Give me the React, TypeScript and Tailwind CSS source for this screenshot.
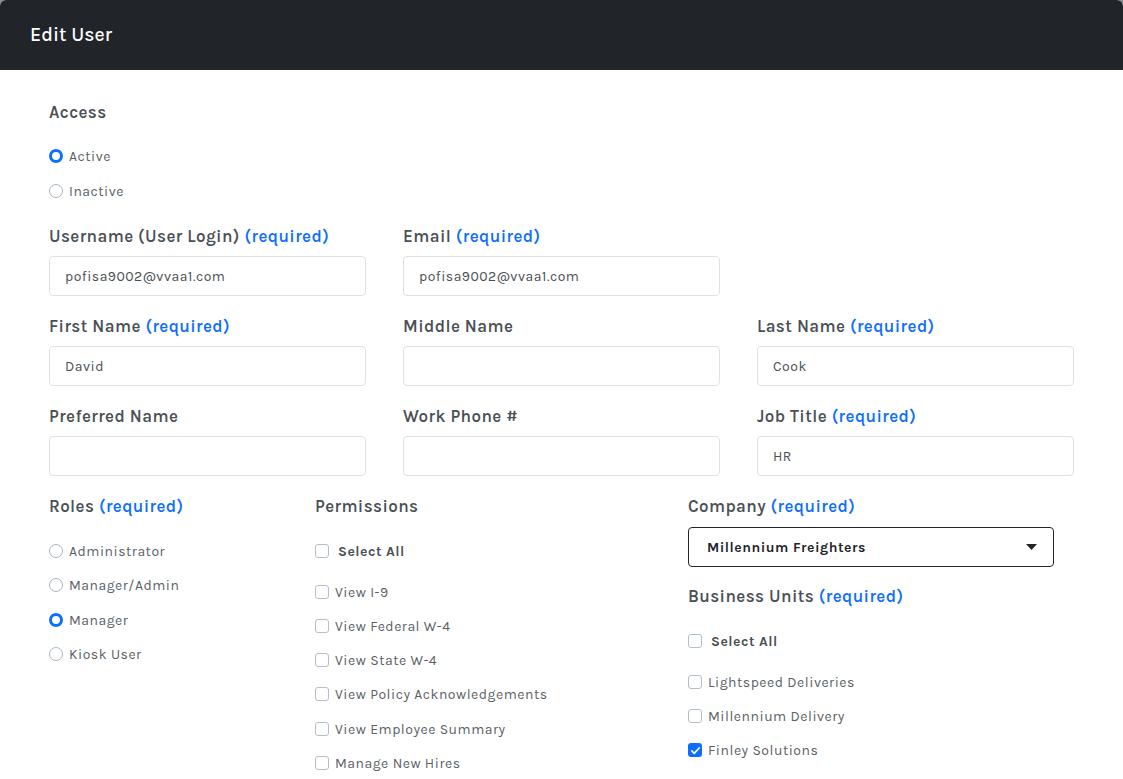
import React from 'react';

const font = { fontFamily: 'Karla, "Noto Sans", Inter, sans-serif' };

function Req() {
  return <span className="text-[#0d6efd]"> (required)</span>;
}

function Label({ text, required }: { text: string; required?: boolean }) {
  return (
    <div className="text-[17px] font-semibold tracking-[0.4px] text-[#4a4f55] leading-[20px] h-[20px] whitespace-nowrap">
      {text}
      {required && <Req />}
    </div>
  );
}

function Field({ label, value, required }: { label: string; value?: string; required?: boolean }) {
  return (
    <div className="flex flex-col">
      <Label text={label} required={required} />
      <div className="mt-[10px] h-[40px] rounded-[4px] border border-[#dee2e6] bg-white flex items-center px-[15px] text-[14px] tracking-[0.5px] text-[#4a4f55]">
        {value}
      </div>
    </div>
  );
}

function Radio({ label, checked, className = '' }: { label: string; checked?: boolean; className?: string }) {
  return (
    <div className={`flex items-center h-[20px] gap-[6px] text-[14px] tracking-[0.5px] text-[#5a5f66] ${className}`}>
      <span
        className={
          checked
            ? 'w-[14px] h-[14px] rounded-full border-[3px] border-[#0d6efd] bg-white'
            : 'w-[14px] h-[14px] rounded-full border-[1.5px] border-[#a9b6c0] bg-white'
        }
      />
      {label}
    </div>
  );
}

function Check({
  label,
  checked,
  bold,
  className = '',
}: {
  label: string;
  checked?: boolean;
  bold?: boolean;
  className?: string;
}) {
  return (
    <div className={`flex items-center h-[20px] text-[14px] tracking-[0.5px] text-[#5a5f66] ${className}`}>
      {checked ? (
        <span className="w-[14px] h-[14px] rounded-[3px] bg-[#0d6efd] flex items-center justify-center">
          <svg width="11" height="11" viewBox="0 0 12 12" fill="none">
            <path d="M2 6.5l2.6 2.6L10.2 3" stroke="white" strokeWidth="1.8" strokeLinecap="round" strokeLinejoin="round" />
          </svg>
        </span>
      ) : (
        <span className="w-[14px] h-[14px] rounded-[3px] border border-[#b3bfc8] bg-white" />
      )}
      <span className={bold ? 'ml-[9px] font-bold text-[#4a4f55]' : 'ml-[6px]'}>{label}</span>
    </div>
  );
}

export default function App() {
  return (
    <div className="w-[1123px] h-[779px] bg-[#8a8d91] overflow-hidden" style={font}>
      <div className="bg-white rounded-t-[6px] h-full overflow-hidden">
        <div className="h-[70px] bg-[#212529] flex items-center px-[30px]">
          <h1 className="text-[19.5px] font-medium text-white">Edit User</h1>
        </div>

        <div className="px-[49px] pt-[32px]">
          {/* Access */}
          <Label text="Access" />
          <Radio label="Active" checked className="mt-[24px]" />
          <Radio label="Inactive" className="mt-[15px]" />

          {/* Text fields */}
          <div className="mt-[25px] grid grid-cols-3 gap-x-[37px] gap-y-[20px]">
            <Field label="Username (User Login)" value="pofisa9002@vvaa1.com" required />
            <Field label="Email" value="pofisa9002@vvaa1.com" required />
            <div />
            <Field label="First Name" value="David" required />
            <Field label="Middle Name" />
            <Field label="Last Name" value="Cook" required />
            <Field label="Preferred Name" />
            <Field label="Work Phone #" />
            <Field label="Job Title" value="HR" required />
          </div>

          {/* Roles / Permissions / Company */}
          <div className="mt-[20px] flex">
            <div className="w-[266px] flex flex-col">
              <Label text="Roles" required />
              <Radio label="Administrator" className="mt-[25px]" />
              <Radio label="Manager/Admin" className="mt-[14px]" />
              <Radio label="Manager" checked className="mt-[15px]" />
              <Radio label="Kiosk User" className="mt-[14px]" />
            </div>

            <div className="w-[373px] flex flex-col">
              <Label text="Permissions" />
              <Check label="Select All" bold className="mt-[25px]" />
              <Check label="View I-9" className="mt-[21px]" />
              <Check label="View Federal W-4" className="mt-[14px]" />
              <Check label="View State W-4" className="mt-[14px]" />
              <Check label="View Policy Acknowledgements" className="mt-[14px]" />
              <Check label="View Employee Summary" className="mt-[15px]" />
              <Check label="Manage New Hires" className="mt-[14px]" />
            </div>

            <div className="w-[366px] flex flex-col">
              <Label text="Company" required />
              <div className="mt-[11px] h-[40px] rounded-[4px] border border-[#212529] flex items-center justify-between pl-[18px] pr-[16px]">
                <span className="text-[14px] font-bold tracking-[0.5px] text-[#212529]">Millennium Freighters</span>
                <svg width="11" height="6" viewBox="0 0 11 6">
                  <path d="M0 0h11L5.5 6z" fill="#212529" />
                </svg>
              </div>
              <div className="mt-[19px]">
                <Label text="Business Units" required />
              </div>
              <Check label="Select All" bold className="mt-[25px]" />
              <Check label="Lightspeed Deliveries" className="mt-[21px]" />
              <Check label="Millennium Delivery" className="mt-[14px]" />
              <Check label="Finley Solutions" checked className="mt-[14px]" />
            </div>
          </div>
        </div>
      </div>
    </div>
  );
}
